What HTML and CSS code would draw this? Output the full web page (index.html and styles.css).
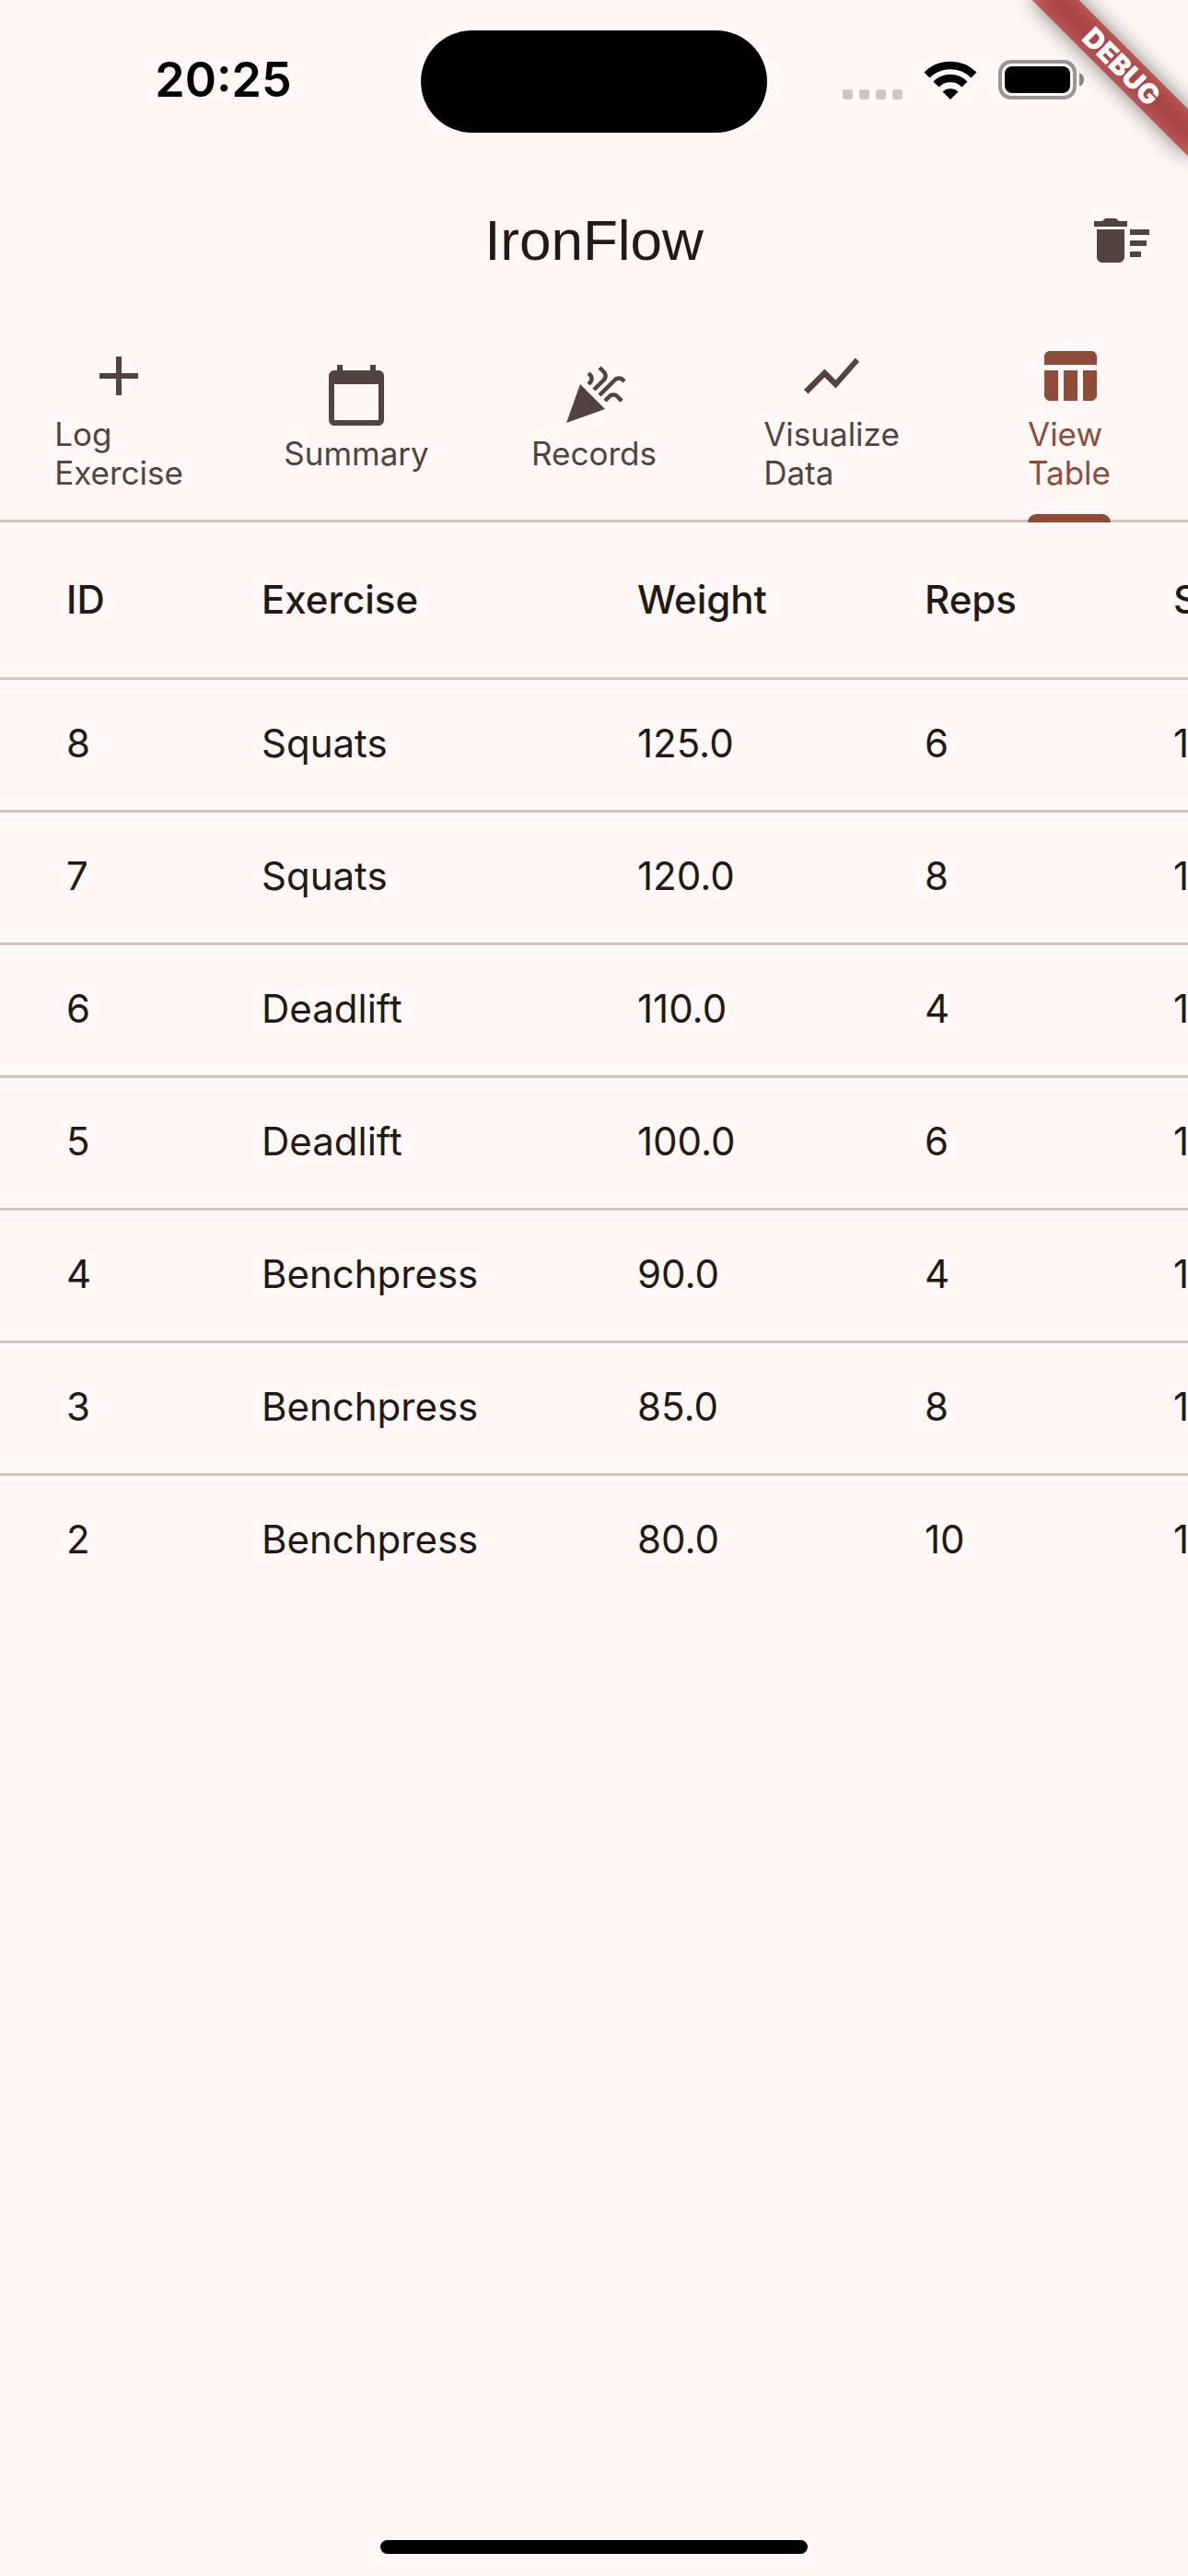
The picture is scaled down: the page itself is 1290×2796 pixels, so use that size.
FILE: index.html
```html
<!DOCTYPE html>
<html lang="en">
<head>
<meta charset="utf-8">
<meta name="viewport" content="width=device-width, initial-scale=1">
<title>IronFlow</title>
<link rel="stylesheet" href="styles.css">
</head>
<body>
<div class="app">
  <div class="status-bar">
    <time class="clock">20:25</time>
    <div class="island"></div>
    <div class="indicators">
      <div class="signal"><i></i><i></i><i></i><i></i></div>
      <svg class="wifi" viewBox="0 0 58 42" aria-label="Wi-Fi">
        <path d="M3.500 15.500A36 36 0 0 1 54.500 15.500" fill="none" stroke="#000" stroke-width="8.500"/>
        <path d="M13.500 25.500A21.500 21.500 0 0 1 44.500 25.500" fill="none" stroke="#000" stroke-width="8.500"/>
        <path d="M20.500 33.500A12.500 12.500 0 0 1 37.500 33.500L29 42z"/>
      </svg>
      <svg class="battery" viewBox="0 0 93 43" aria-label="Battery full">
        <rect x="2" y="2" width="81" height="39" rx="12" fill="none" stroke="#9b9594" stroke-width="4"/>
        <rect x="7" y="7" width="71" height="29" rx="8"/>
        <path d="M88 14.500a5 7 0 0 1 0 14z" fill="#8c8685"/>
      </svg>
    </div>
  </div>

  <header class="app-bar">
    <h1 class="title">IronFlow</h1>
    <button class="icon-button" type="button" aria-label="Delete all">
      <svg class="icon" viewBox="0 0 24 24"><path d="M15 16h4v2h-4zm0-8h7v2h-7zm0 4h6v2h-6zM3 18c0 1.100.9 2 2 2h6c1.100 0 2-.9 2-2V8H3v10zM14 5h-3c-.6-.7-1-1-1.500-1h-3C6 4 5.600 4.300 5 5H2v2h12z"/></svg>
    </button>
  </header>

  <nav class="tabs">
    <a class="tab" href="#log"><span class="tab-content">
      <svg class="icon" viewBox="0 0 24 24"><path d="M19 13h-6v6h-2v-6H5v-2h6V5h2v6h6v2z"/></svg>
      <span class="tab-label">Log<br>Exercise</span></span></a>
    <a class="tab" href="#summary"><span class="tab-content">
      <svg class="icon" viewBox="0 0 24 24"><path d="M20 3h-1V1h-2v2H7V1H5v2H4c-1.100 0-2 .9-2 2v16c0 1.100.9 2 2 2h16c1.100 0 2-.9 2-2V5c0-1.100-.9-2-2-2zm0 18H4V8h16v13z"/></svg>
      <span class="tab-label">Summary</span></span></a>
    <a class="tab" href="#records"><span class="tab-content">
      <svg class="icon" viewBox="0 0 24 24"><path d="M2 22l14-5-9-9zM14.530 12.530l5.590-5.590c.49-.49 1.280-.49 1.770 0l.59.59 1.060-1.060-.59-.59c-1.070-1.070-2.820-1.070-3.890 0l-5.590 5.590 1.060 1.060zM10.060 6.880l-.59.59 1.060 1.060.59-.59c1.070-1.070 1.070-2.820 0-3.890l-.59-.59-1.060 1.070.59.59c.48.48.48 1.280 0 1.760zM17.060 11.880l-1.590 1.590 1.060 1.060 1.590-1.590c.49-.49 1.280-.49 1.770 0l1.610 1.610 1.060-1.060-1.610-1.610c-1.080-1.070-2.830-1.070-3.900 0zM15.060 5.880l-3.590 3.590 1.060 1.060 3.590-3.590c1.070-1.070 1.070-2.820 0-3.890l-1.590-1.590-1.060 1.060 1.590 1.590c.48.49.48 1.290 0 1.770z"/></svg>
      <span class="tab-label">Records</span></span></a>
    <a class="tab" href="#visualize"><span class="tab-content">
      <svg class="icon" viewBox="0 0 24 24"><path d="M3.500 18.490l6-6.010 4 4L22 6.920l-1.410-1.410-7.090 7.970-4-4L2 16.990z"/></svg>
      <span class="tab-label">Visualize<br>Data</span></span></a>
    <a class="tab tab-active" href="#table" aria-current="page"><span class="tab-content">
      <svg class="icon" viewBox="0 0 24 24"><path d="M10 10.020h5V21h-5zM17 21h3c1.100 0 2-.9 2-2v-9h-5v11zm3-18H5c-1.100 0-2 .9-2 2v3h19V5c0-1.100-.9-2-2-2zM3 19c0 1.100.9 2 2 2h3V10H3v9z"/></svg>
      <span class="tab-label">View<br>Table</span></span></a>
  </nav>

  <main class="table-scroll">
    <table class="log-table">
      <colgroup><col class="col-id"><col class="col-exercise"><col class="col-weight"><col class="col-reps"><col class="col-sets"></colgroup>
      <thead>
        <tr><th>ID</th><th>Exercise</th><th>Weight</th><th>Reps</th><th>Sets</th></tr>
      </thead>
      <tbody>
        <tr><td>8</td><td>Squats</td><td>125.0</td><td>6</td><td>1</td></tr>
        <tr><td>7</td><td>Squats</td><td>120.0</td><td>8</td><td>1</td></tr>
        <tr><td>6</td><td>Deadlift</td><td>110.0</td><td>4</td><td>1</td></tr>
        <tr><td>5</td><td>Deadlift</td><td>100.0</td><td>6</td><td>1</td></tr>
        <tr><td>4</td><td>Benchpress</td><td>90.0</td><td>4</td><td>1</td></tr>
        <tr><td>3</td><td>Benchpress</td><td>85.0</td><td>8</td><td>1</td></tr>
        <tr><td>2</td><td>Benchpress</td><td>80.0</td><td>10</td><td>1</td></tr>
      </tbody>
    </table>
  </main>

  <footer class="home-area"><div class="home-indicator"></div></footer>

  <div class="debug-corner"><div class="debug-banner"><span>DEBUG</span></div></div>
</div>
</body>
</html>
```

FILE: styles.css
```css
:root {
  --surface: #fff8f6;
  --on-surface: #231917;
  --on-surface-variant: #53433f;
  --outline: #d8c2bc;
  --primary: #8f4c38;
}

* {
  box-sizing: border-box;
}

body {
  margin: 0;
  background: var(--surface);
  color: var(--on-surface);
  font-family: Inter, "Liberation Sans", sans-serif;
}

.app {
  position: relative;
  display: flex;
  flex-direction: column;
  min-height: 100vh;
  overflow: hidden;
}

/* Status bar */
.status-bar {
  display: grid;
  grid-template-columns: 1fr 376px 1fr;
  align-items: center;
  height: 177px;
}

.clock {
  padding: 0 0 4px 28px;
  color: #000;
  font-size: 52px;
  font-weight: 600;
  line-height: 64px;
  text-align: center;
}

.island {
  height: 111px;
  border-radius: 56px;
  background: #000;
}

.indicators {
  display: flex;
  align-items: flex-end;
  justify-content: flex-end;
  gap: 23px;
  padding: 0 113px 4px 0;
}

.signal {
  display: flex;
  gap: 7px;
}

.signal i {
  width: 11px;
  height: 11px;
  border-radius: 3px;
  background: #ccc6c5;
}

.wifi {
  width: 58px;
  height: 42px;
}

.battery {
  width: 93px;
  height: 43px;
}

/* App bar */
.app-bar {
  display: grid;
  grid-template-columns: 144px 1fr 144px;
  align-items: center;
  height: 168px;
}

.title {
  grid-column: 2;
  margin: 0;
  font-family: "Liberation Sans", Arial, sans-serif;
  font-size: 62px;
  font-weight: 400;
  line-height: 84px;
  text-align: center;
}

.icon-button {
  display: grid;
  place-items: center;
  width: 144px;
  height: 144px;
  padding: 0;
  border: 0;
  background: none;
  color: var(--on-surface-variant);
}

.icon {
  width: 72px;
  height: 72px;
  fill: currentColor;
}

/* Tabs */
.tabs {
  display: grid;
  grid-template-columns: repeat(5, 1fr);
  height: 222px;
  border-bottom: 3px solid var(--outline);
}

.tab {
  display: flex;
  justify-content: center;
  height: 222px;
  color: var(--on-surface-variant);
  text-decoration: none;
}

.tab-content {
  position: relative;
  display: flex;
  flex-direction: column;
  align-items: center;
  justify-content: center;
  gap: 6px;
  padding-bottom: 6px;
}

.tab-label {
  font-size: 35px;
  line-height: 42px;
}

.tab-active {
  color: var(--primary);
}

.tab-active .tab-content::after {
  content: "";
  position: absolute;
  right: 0;
  bottom: 0;
  left: 0;
  height: 9px;
  border-radius: 9px 9px 0 0;
  background: var(--primary);
}

/* Log table */
.table-scroll {
  flex: 1;
  overflow-x: auto;
  scrollbar-width: none;
}

.log-table {
  width: 1440px;
  border-spacing: 0;
  table-layout: fixed;
}

.col-id {
  width: 284px;
}

.col-exercise {
  width: 408px;
}

.col-weight {
  width: 312px;
}

.col-reps {
  width: 270px;
}

.log-table th,
.log-table td {
  height: 144px;
  padding: 0;
  font-size: 42px;
  line-height: 60px;
  text-align: left;
}

.log-table th {
  height: 168px;
  font-weight: 500;
}

.log-table td {
  padding-bottom: 3px;
  border-top: 3px solid var(--outline);
}

.log-table th:first-child,
.log-table td:first-child {
  padding-left: 72px;
}

/* Home indicator */
.home-area {
  display: flex;
  justify-content: center;
  padding-bottom: 24px;
}

.home-indicator {
  width: 36%;
  height: 15px;
  border-radius: 8px;
  background: #000;
}

/* Debug banner over the top right corner */
.debug-corner {
  position: absolute;
  top: 0;
  right: 0;
  display: flex;
  align-items: center;
  justify-content: center;
  width: 144px;
  height: 144px;
}

.debug-banner {
  position: relative;
  flex: none;
  width: 240px;
  height: 36px;
  color: #fff;
  font-size: 30px;
  font-weight: 900;
  line-height: 36px;
  text-align: center;
  transform: rotate(45deg);
}

.debug-banner::before,
.debug-banner::after {
  content: "";
  position: absolute;
  inset: 0;
  background: rgba(0, 0, 0, 0.5);
  filter: blur(12px);
}

.debug-banner::after {
  background: rgba(183, 28, 28, 0.63);
  filter: none;
}

.debug-banner span {
  position: relative;
  z-index: 1;
}
```
